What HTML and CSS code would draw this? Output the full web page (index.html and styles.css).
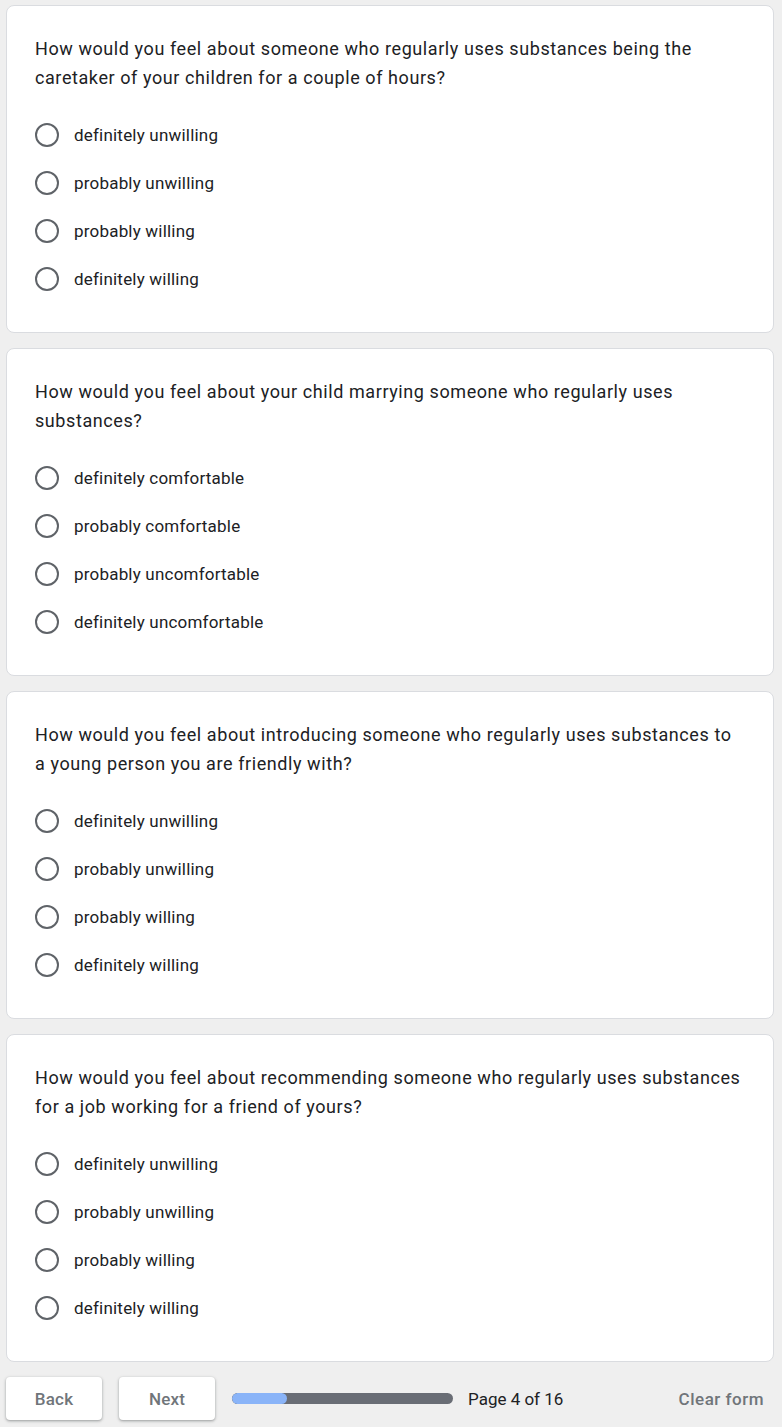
FILE: index.html
```html
<!DOCTYPE html>
<html lang="en">
<head>
<meta charset="utf-8">
<title>Form page 4</title>
<link rel="stylesheet" href="styles.css">
</head>
<body>
<main class="page">
  <section class="card">
    <div class="question">How would you feel about someone who regularly uses substances being the caretaker of your children for a couple of hours?</div>
    <div class="options">
      <label class="option"><span class="radio"></span><span class="label">definitely unwilling</span></label>
      <label class="option"><span class="radio"></span><span class="label">probably unwilling</span></label>
      <label class="option"><span class="radio"></span><span class="label">probably willing</span></label>
      <label class="option"><span class="radio"></span><span class="label">definitely willing</span></label>
    </div>
  </section>
  <section class="card">
    <div class="question">How would you feel about your child marrying someone who regularly uses substances?</div>
    <div class="options">
      <label class="option"><span class="radio"></span><span class="label">definitely comfortable</span></label>
      <label class="option"><span class="radio"></span><span class="label">probably comfortable</span></label>
      <label class="option"><span class="radio"></span><span class="label">probably uncomfortable</span></label>
      <label class="option"><span class="radio"></span><span class="label">definitely uncomfortable</span></label>
    </div>
  </section>
  <section class="card">
    <div class="question">How would you feel about introducing someone who regularly uses substances to a young person you are friendly with?</div>
    <div class="options">
      <label class="option"><span class="radio"></span><span class="label">definitely unwilling</span></label>
      <label class="option"><span class="radio"></span><span class="label">probably unwilling</span></label>
      <label class="option"><span class="radio"></span><span class="label">probably willing</span></label>
      <label class="option"><span class="radio"></span><span class="label">definitely willing</span></label>
    </div>
  </section>
  <section class="card">
    <div class="question">How would you feel about recommending someone who regularly uses substances for a job working for a friend of yours?</div>
    <div class="options">
      <label class="option"><span class="radio"></span><span class="label">definitely unwilling</span></label>
      <label class="option"><span class="radio"></span><span class="label">probably unwilling</span></label>
      <label class="option"><span class="radio"></span><span class="label">probably willing</span></label>
      <label class="option"><span class="radio"></span><span class="label">definitely willing</span></label>
    </div>
  </section>
  <nav class="footer">
    <button class="btn">Back</button>
    <button class="btn">Next</button>
    <div class="progress"><div class="progress-fill"></div></div>
    <span class="page-count">Page 4 of 16</span>
    <span class="clear">Clear form</span>
  </nav>
</main>
</body>
</html>
```

FILE: styles.css
```css
html, body {
  margin: 0;
  padding: 0;
  background: #efefef;
}
body {
  font-family: Roboto, "Liberation Sans", Arial, sans-serif;
  color: #202124;
}
.page {
  padding: 5px 8px 0 6px;
  display: flex;
  flex-direction: column;
  gap: 15px;
}
.card {
  background: #fff;
  border: 1px solid #dadce0;
  border-radius: 8px;
  padding: 28px 28px 29px 28px;
}
.question {
  font-size: 18px;
  line-height: 29px;
  letter-spacing: 0.58px;
  margin-bottom: 19px;
}
.options {
  display: flex;
  flex-direction: column;
}
.option {
  display: flex;
  align-items: center;
  height: 48px;
}
.radio {
  width: 20px;
  height: 20px;
  border: 2px solid #5f6368;
  border-radius: 50%;
  flex: none;
  margin-right: 15px;
}
.label {
  font-size: 17px;
  letter-spacing: 0.2px;
  color: #202124;
}
.footer {
  display: flex;
  align-items: center;
  height: 43px;
  margin-bottom: 8px;
}
.btn {
  width: 96px;
  height: 43px;
  border: none;
  background: #fff;
  border-radius: 4px;
  box-shadow: 0 1px 2px rgba(60,64,67,.3), 0 1px 3px 1px rgba(60,64,67,.15);
  font-family: Roboto, "Liberation Sans", Arial, sans-serif;
  font-size: 17px;
  font-weight: 500;
  color: #70757a;
  letter-spacing: 0.2px;
  margin-right: 17px;
  padding: 0;
}
.progress {
  width: 221px;
  height: 11px;
  border-radius: 6px;
  background: #696d75;
  overflow: hidden;
  margin-right: 15px;
}
.progress-fill {
  width: 55px;
  height: 100%;
  background: #8ab4f8;
  border-radius: 6px;
}
.page-count {
  font-size: 17px;
  color: #202124;
}
.clear {
  margin-left: auto;
  margin-right: 10px;
  font-size: 17px;
  font-weight: 500;
  color: #70757a;
  letter-spacing: 0.5px;
}
```
